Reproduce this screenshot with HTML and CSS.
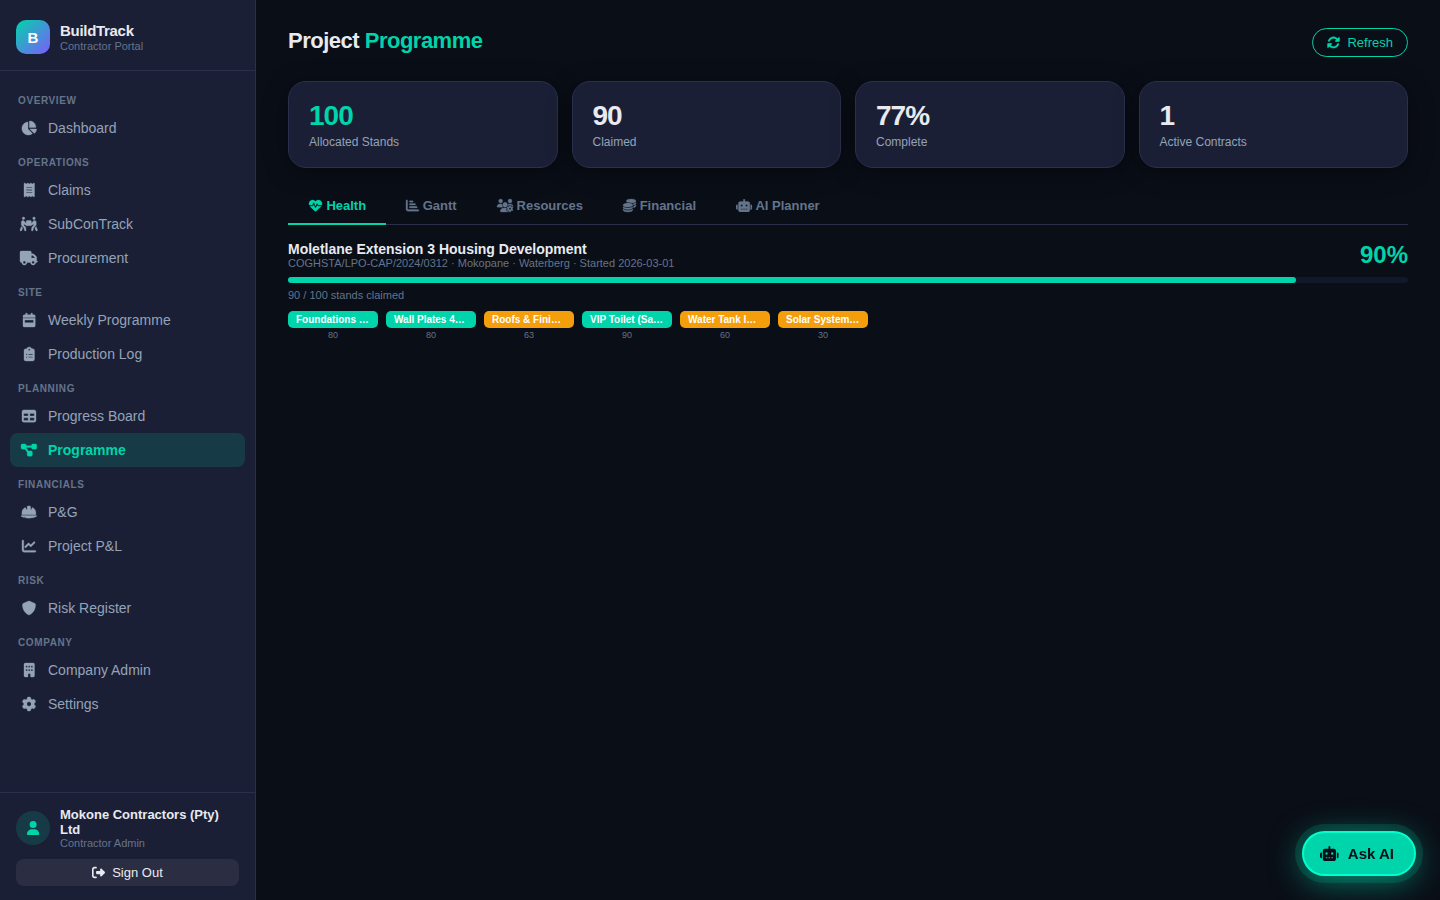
FILE: index.html
```html
<!DOCTYPE html>
<html lang="en">
<head>
    <meta charset="UTF-8">
    <meta name="viewport" content="width=device-width, initial-scale=1.0">
    <title>BuildTrack - Project Programme</title>
    <link rel="stylesheet" href="styles.css">
</head>
<body>
    <!-- Icon shapes shared by the page -->
    <svg class="sprite" aria-hidden="true">
        <symbol id="i-robot" viewBox="0 0 640 512"><path d="M320 0c17.7 0 32 14.3 32 32V96H472c39.8 0 72 32.2 72 72V440c0 39.8-32.2 72-72 72H168c-39.8 0-72-32.2-72-72V168c0-39.8 32.2-72 72-72H288V32c0-17.7 14.3-32 32-32zM208 384c-8.8 0-16 7.2-16 16s7.2 16 16 16h32c8.8 0 16-7.2 16-16s-7.2-16-16-16H208zm96 0c-8.8 0-16 7.2-16 16s7.2 16 16 16h32c8.8 0 16-7.2 16-16s-7.2-16-16-16H304zm96 0c-8.8 0-16 7.2-16 16s7.2 16 16 16h32c8.8 0 16-7.2 16-16s-7.2-16-16-16H400zM264 256a40 40 0 1 0 -80 0 40 40 0 1 0 80 0zm152 40a40 40 0 1 0 0-80 40 40 0 1 0 0 80zM48 224H64V416H48c-26.5 0-48-21.5-48-48V272c0-26.5 21.5-48 48-48zm544 0c26.5 0 48 21.5 48 48v96c0 26.5-21.5 48-48 48H576V224h16z"/></symbol>
    </svg>

    <!-- Sidebar -->
    <aside class="sidebar">
        <div class="brand">
            <div class="brand-logo">B</div>
            <div>
                <div class="brand-name">BuildTrack</div>
                <div class="brand-sub">Contractor Portal</div>
            </div>
        </div>

        <nav class="nav">
            <div class="nav-label">Overview</div>
            <a class="nav-item">
                <span class="nav-icon"><svg class="icon" viewBox="0 0 576 512"><path d="M304 240V16.6c0-9 7-16.6 16-16.6C443.7 0 544 100.3 544 224c0 9-7.6 16-16.6 16H304zM32 272C32 150.7 122.1 50.3 239 34.3c9.2-1.3 17 6.1 17 15.4V288L412.5 444.5c6.7 6.7 6.2 17.7-1.5 23.1C371.8 495.6 323.8 512 272 512C139.5 512 32 404.6 32 272zm526.4 16c9.3 0 16.6 7.8 15.4 17c-7.7 55.9-34.6 105.6-73.9 142.3c-6 5.6-15.4 5.2-21.2-.7L320 288H558.4z"/></svg></span>
                Dashboard
            </a>

            <div class="nav-label">Operations</div>
            <a class="nav-item">
                <span class="nav-icon"><svg class="icon" viewBox="0 0 384 512"><path d="M14 2.2C22.5-1.7 32.5-.3 39.6 5.8L80 40.4 120.4 5.8c9-7.7 22.3-7.7 31.2 0L192 40.4 232.4 5.8c9-7.7 22.3-7.7 31.2 0L304 40.4 344.4 5.8c7.1-6.1 17.1-7.5 25.6-3.6s14 12.4 14 21.8V488c0 9.4-5.5 17.9-14 21.8s-18.5 2.5-25.6-3.6L304 471.6l-40.4 34.6c-9 7.7-22.3 7.7-31.2 0L192 471.6l-40.4 34.6c-9 7.7-22.3 7.7-31.2 0L80 471.6 39.6 506.2c-7.1 6.1-17.1 7.5-25.6 3.6S0 497.4 0 488V24C0 14.6 5.5 6.1 14 2.2zM96 144c-8.8 0-16 7.2-16 16s7.2 16 16 16H288c8.8 0 16-7.2 16-16s-7.2-16-16-16H96zM80 352c0 8.8 7.2 16 16 16H288c8.8 0 16-7.2 16-16s-7.2-16-16-16H96c-8.8 0-16 7.2-16 16zM96 240c-8.8 0-16 7.2-16 16s7.2 16 16 16H288c8.8 0 16-7.2 16-16s-7.2-16-16-16H96z"/></svg></span>
                Claims
            </a>
            <a class="nav-item">
                <span class="nav-icon"><svg class="icon" viewBox="0 0 640 512"><path d="M80 48a48 48 0 1 1 96 0A48 48 0 1 1 80 48zm64 193.7v65.1l51 51c7.1 7.1 11.8 16.2 13.4 26.1l15.2 90.9c2.9 17.4-8.9 33.9-26.3 36.8s-33.9-8.9-36.8-26.3l-14.3-85.9L66.8 320C54.8 308 48 291.7 48 274.7V186.6c0-32.4 26.2-58.6 58.6-58.6c24.1 0 46.5 12 59.9 32l47.4 71.1 10.1 5V160c0-17.7 14.3-32 32-32H384c17.7 0 32 14.3 32 32v76.2l10.1-5L473.5 160c13.3-20 35.8-32 59.9-32c32.4 0 58.6 26.2 58.6 58.6v88.1c0 17-6.7 33.3-18.7 45.3l-79.4 79.4-14.3 85.9c-2.9 17.4-19.4 29.2-36.8 26.3s-29.2-19.4-26.3-36.8l15.2-90.9c1.6-9.9 6.3-19 13.4-26.1l51-51V241.7l-19 28.5c-4.6 7-11 12.6-18.5 16.3l-59.6 29.8c-2.4 1.3-4.9 2.2-7.6 2.8c-2.6 .6-5.3 .9-7.9 .8H256.7c-2.5 .1-5-.2-7.5-.7c-2.9-.6-5.6-1.6-8.1-3l-59.5-29.8c-7.5-3.7-13.8-9.4-18.5-16.3l-19-28.5zM2.3 468.1L50.1 348.6l49.2 49.2-37.6 94c-6.6 16.4-25.2 24.4-41.6 17.8S-4.3 484.5 2.3 468.1zM512 0a48 48 0 1 1 0 96 48 48 0 1 1 0-96zm77.9 348.6l47.8 119.5c6.6 16.4-1.4 35-17.8 41.6s-35-1.4-41.6-17.8l-37.6-94 49.2-49.2z"/></svg></span>
                SubConTrack
            </a>
            <a class="nav-item">
                <span class="nav-icon"><svg class="icon" viewBox="0 0 640 512"><path d="M48 0C21.5 0 0 21.5 0 48V368c0 26.5 21.5 48 48 48H64c0 53 43 96 96 96s96-43 96-96H384c0 53 43 96 96 96s96-43 96-96h32c17.7 0 32-14.3 32-32s-14.3-32-32-32V288 256 237.3c0-17-6.7-33.3-18.7-45.3L512 114.7c-12-12-28.3-18.7-45.3-18.7H416V48c0-26.5-21.5-48-48-48H48zM416 160h50.7L544 237.3V256H416V160zM112 416a48 48 0 1 1 96 0 48 48 0 1 1 -96 0zm368-48a48 48 0 1 1 0 96 48 48 0 1 1 0-96z"/></svg></span>
                Procurement
            </a>

            <div class="nav-label">Site</div>
            <a class="nav-item">
                <span class="nav-icon"><svg class="icon" viewBox="0 0 448 512"><path d="M128 0c17.7 0 32 14.3 32 32V64H288V32c0-17.7 14.3-32 32-32s32 14.3 32 32V64h48c26.5 0 48 21.5 48 48v48H0V112C0 85.5 21.5 64 48 64H96V32c0-17.7 14.3-32 32-32zM0 192H448V464c0 26.5-21.5 48-48 48H48c-26.5 0-48-21.5-48-48V192zm80 64c-8.8 0-16 7.2-16 16v64c0 8.8 7.2 16 16 16H368c8.8 0 16-7.2 16-16V272c0-8.8-7.2-16-16-16H80z"/></svg></span>
                Weekly Programme
            </a>
            <a class="nav-item">
                <span class="nav-icon"><svg class="icon" viewBox="0 0 384 512"><path d="M192 0c-41.8 0-77.4 26.7-90.5 64H64C28.7 64 0 92.7 0 128V448c0 35.3 28.7 64 64 64H320c35.3 0 64-28.7 64-64V128c0-35.3-28.7-64-64-64H282.5C269.4 26.7 233.8 0 192 0zm0 64a32 32 0 1 1 0 64 32 32 0 1 1 0-64zM72 272a24 24 0 1 1 48 0 24 24 0 1 1 -48 0zm104-16H304c8.8 0 16 7.2 16 16s-7.2 16-16 16H176c-8.8 0-16-7.2-16-16s7.2-16 16-16zM72 368a24 24 0 1 1 48 0 24 24 0 1 1 -48 0zm88 0c0-8.8 7.2-16 16-16H304c8.8 0 16 7.2 16 16s-7.2 16-16 16H176c-8.8 0-16-7.2-16-16z"/></svg></span>
                Production Log
            </a>

            <div class="nav-label">Planning</div>
            <a class="nav-item">
                <span class="nav-icon"><svg class="icon" viewBox="0 0 512 512"><path d="M64 256V160H224v96H64zm0 64H224v96H64V320zm224 96V320H448v96H288zM448 256H288V160H448v96zM64 32C28.7 32 0 60.7 0 96V416c0 35.3 28.7 64 64 64H448c35.3 0 64-28.7 64-64V96c0-35.3-28.7-64-64-64H64z"/></svg></span>
                Progress Board
            </a>
            <a class="nav-item active">
                <span class="nav-icon"><svg class="icon" viewBox="0 0 576 512"><path d="M0 80C0 53.5 21.5 32 48 32h96c26.5 0 48 21.5 48 48V96H384V80c0-26.5 21.5-48 48-48h96c26.5 0 48 21.5 48 48v96c0 26.5-21.5 48-48 48H432c-26.5 0-48-21.5-48-48V160H192v16c0 1.7-.1 3.4-.3 5L272 288h96c26.5 0 48 21.5 48 48v96c0 26.5-21.5 48-48 48H272c-26.5 0-48-21.5-48-48V336c0-1.7 .1-3.4 .3-5L144 224H48c-26.5 0-48-21.5-48-48V80z"/></svg></span>
                Programme
            </a>

            <div class="nav-label">Financials</div>
            <a class="nav-item">
                <span class="nav-icon"><svg class="icon" viewBox="0 0 576 512"><path d="M256 32c-17.7 0-32 14.3-32 32v2.3 99.6c0 5.6-4.5 10.1-10.1 10.1c-3.6 0-7-1.9-8.8-5.1L157.1 87C83 123.5 32 199.8 32 288v64H544l0-66.4c-.9-87.2-51.7-162.4-125.1-198.6l-48 83.9c-1.8 3.2-5.2 5.1-8.8 5.1c-5.6 0-10.1-4.5-10.1-10.1V66.3 64c0-17.7-14.3-32-32-32H256zM16.6 384C7.4 384 0 391.4 0 400.6c0 4.7 2 9.2 5.8 11.9C27.5 428.4 111.8 480 288 480s260.5-51.6 282.2-67.5c3.8-2.8 5.8-7.2 5.8-11.9c0-9.2-7.4-16.6-16.6-16.6H16.6z"/></svg></span>
                P&amp;G
            </a>
            <a class="nav-item">
                <span class="nav-icon"><svg class="icon" viewBox="0 0 512 512"><path d="M64 64c0-17.7-14.3-32-32-32S0 46.3 0 64V400c0 44.2 35.8 80 80 80H480c17.7 0 32-14.3 32-32s-14.3-32-32-32H80c-8.8 0-16-7.2-16-16V64zm406.6 86.6c12.5-12.5 12.5-32.8 0-45.3s-32.8-12.5-45.3 0L320 210.7l-57.4-57.4c-12.5-12.5-32.8-12.5-45.3 0l-112 112c-12.5 12.5-12.5 32.8 0 45.3s32.8 12.5 45.3 0L240 221.3l57.4 57.4c12.5 12.5 32.8 12.5 45.3 0l128-128z"/></svg></span>
                Project P&amp;L
            </a>

            <div class="nav-label">Risk</div>
            <a class="nav-item">
                <span class="nav-icon"><svg class="icon" viewBox="0 0 512 512"><path d="M256 0c4.6 0 9.2 1 13.4 2.9L457.7 82.8c22 9.3 38.4 31 38.3 57.2c-.5 99.2-41.3 280.7-213.6 363.2c-16.7 8-36.1 8-52.8 0C57.3 420.7 16.5 239.2 16 140c-.1-26.2 16.3-47.9 38.3-57.2L242.7 2.9C246.8 1 251.4 0 256 0z"/></svg></span>
                Risk Register
            </a>

            <div class="nav-label">Company</div>
            <a class="nav-item">
                <span class="nav-icon"><svg class="icon" viewBox="0 0 384 512"><path d="M48 0C21.5 0 0 21.5 0 48V464c0 26.5 21.5 48 48 48h96V432c0-26.5 21.5-48 48-48s48 21.5 48 48v80h96c26.5 0 48-21.5 48-48V48c0-26.5-21.5-48-48-48H48zM64 240c0-8.8 7.2-16 16-16h32c8.8 0 16 7.2 16 16v32c0 8.8-7.2 16-16 16H80c-8.8 0-16-7.2-16-16V240zm112-16h32c8.8 0 16 7.2 16 16v32c0 8.8-7.2 16-16 16H176c-8.8 0-16-7.2-16-16V240c0-8.8 7.2-16 16-16zm80 16c0-8.8 7.2-16 16-16h32c8.8 0 16 7.2 16 16v32c0 8.8-7.2 16-16 16H272c-8.8 0-16-7.2-16-16V240zM80 96h32c8.8 0 16 7.2 16 16v32c0 8.8-7.2 16-16 16H80c-8.8 0-16-7.2-16-16V112c0-8.8 7.2-16 16-16zm80 16c0-8.8 7.2-16 16-16h32c8.8 0 16 7.2 16 16v32c0 8.8-7.2 16-16 16H176c-8.8 0-16-7.2-16-16V112zM272 96h32c8.8 0 16 7.2 16 16v32c0 8.8-7.2 16-16 16H272c-8.8 0-16-7.2-16-16V112c0-8.8 7.2-16 16-16z"/></svg></span>
                Company Admin
            </a>
            <a class="nav-item">
                <span class="nav-icon"><svg class="icon" viewBox="0 0 512 512"><path d="M495.9 166.6c3.2 8.7 .5 18.4-6.4 24.6l-43.3 39.4c1.1 8.3 1.7 16.8 1.7 25.4s-.6 17.1-1.7 25.4l43.3 39.4c6.9 6.2 9.6 15.9 6.4 24.6c-4.4 11.9-9.7 23.3-15.8 34.3l-4.7 8.1c-6.6 11-14 21.4-22.1 31.2c-5.9 7.2-15.7 9.6-24.5 6.8l-55.7-17.7c-13.4 10.3-28.2 18.9-44 25.4l-12.5 57.1c-2 9.1-9 16.3-18.2 17.8c-13.8 2.3-28 3.5-42.5 3.5s-28.7-1.2-42.5-3.5c-9.2-1.5-16.2-8.7-18.2-17.8l-12.5-57.1c-15.8-6.5-30.6-15.1-44-25.4L83.1 425.9c-8.8 2.8-18.6 .3-24.5-6.8c-8.1-9.8-15.5-20.2-22.1-31.2l-4.7-8.1c-6.1-11-11.4-22.4-15.8-34.3c-3.2-8.7-.5-18.4 6.4-24.6l43.3-39.4C64.6 273.1 64 264.6 64 256s.6-17.1 1.7-25.4L22.4 191.2c-6.9-6.2-9.6-15.9-6.4-24.6c4.4-11.9 9.7-23.3 15.8-34.3l4.7-8.1c6.6-11 14-21.4 22.1-31.2c5.9-7.2 15.7-9.6 24.5-6.8l55.7 17.7c13.4-10.3 28.2-18.9 44-25.4l12.5-57.1c2-9.1 9-16.3 18.2-17.8C227.3 1.2 241.5 0 256 0s28.7 1.2 42.5 3.5c9.2 1.5 16.2 8.7 18.2 17.8l12.5 57.1c15.8 6.5 30.6 15.1 44 25.4l55.7-17.7c8.8-2.8 18.6-.3 24.5 6.8c8.1 9.8 15.5 20.2 22.1 31.2l4.7 8.1c6.1 11 11.4 22.4 15.8 34.3zM256 336a80 80 0 1 0 0-160 80 80 0 1 0 0 160z"/></svg></span>
                Settings
            </a>
        </nav>

        <div class="sidebar-footer">
            <div class="user">
                <div class="avatar"><svg class="icon" viewBox="0 0 448 512"><path d="M224 256A128 128 0 1 0 224 0a128 128 0 1 0 0 256zm-45.7 48C79.8 304 0 383.8 0 482.3C0 498.7 13.3 512 29.7 512H418.3c16.4 0 29.7-13.3 29.7-29.7C448 383.8 368.2 304 269.7 304H178.3z"/></svg></div>
                <div>
                    <div class="user-name">Mokone Contractors (Pty) Ltd</div>
                    <div class="user-role">Contractor Admin</div>
                </div>
            </div>
            <button class="btn-signout">
                <svg class="icon" viewBox="0 0 512 512"><path d="M377.9 105.9L500.7 228.7c7.2 7.2 11.3 17.1 11.3 27.3s-4.1 20.1-11.3 27.3L377.9 406.1c-6.4 6.4-15 9.9-24 9.9c-18.7 0-33.9-15.2-33.9-33.9l0-62.1-128 0c-17.7 0-32-14.3-32-32l0-64c0-17.7 14.3-32 32-32l128 0 0-62.1c0-18.7 15.2-33.9 33.9-33.9c9 0 17.6 3.6 24 9.9zM160 96L96 96c-17.7 0-32 14.3-32 32l0 256c0 17.7 14.3 32 32 32l64 0c17.7 0 32 14.3 32 32s-14.3 32-32 32l-64 0c-53 0-96-43-96-96L0 128C0 75 43 32 96 32l64 0c17.7 0 32 14.3 32 32s-14.3 32-32 32z"/></svg>
                Sign Out
            </button>
        </div>
    </aside>

    <!-- Main content -->
    <main class="main">
        <header class="page-header">
            <h1>Project <span>Programme</span></h1>
            <button class="btn-refresh">
                <svg class="icon" viewBox="0 0 512 512"><path d="M142.9 142.9c-17.5 17.5-30.1 38-37.8 59.8c-5.9 16.7-24.2 25.4-40.8 19.5s-25.4-24.2-19.5-40.8C55.6 150.7 73.2 122 97.6 97.6c87.2-87.2 228.3-87.5 315.8-1L455 55c6.9-6.9 17.2-8.9 26.2-5.2s14.8 12.5 14.8 22.2l0 128c0 13.3-10.7 24-24 24l-8.4 0L344 224c-9.7 0-18.5-5.8-22.2-14.8s-1.7-19.3 5.2-26.2l41.1-41.1c-62.6-61.5-163.1-61.2-225.3 1zM16 312c0-13.3 10.7-24 24-24l7.6 0 .7 0L168 288c9.7 0 18.5 5.8 22.2 14.8s1.7 19.3-5.2 26.2l-41.1 41.1c62.6 61.5 163.1 61.2 225.3-1c17.5-17.5 30.1-38 37.8-59.8c5.9-16.7 24.2-25.4 40.8-19.5s25.4 24.2 19.5 40.8c-10.8 30.6-28.4 59.3-52.9 83.8c-87.2 87.2-228.3 87.5-315.8 1L57 457c-6.9 6.9-17.2 8.9-26.2 5.2S16 449.7 16 440l0-119.6 0-.7 0-7.6z"/></svg>
                Refresh
            </button>
        </header>

        <section class="stats">
            <div class="stat-card">
                <div class="stat-value accent">100</div>
                <div class="stat-label">Allocated Stands</div>
            </div>
            <div class="stat-card">
                <div class="stat-value">90</div>
                <div class="stat-label">Claimed</div>
            </div>
            <div class="stat-card">
                <div class="stat-value">77%</div>
                <div class="stat-label">Complete</div>
            </div>
            <div class="stat-card">
                <div class="stat-value">1</div>
                <div class="stat-label">Active Contracts</div>
            </div>
        </section>

        <div class="tabs">
            <button class="tab active"><svg class="icon" viewBox="0 0 512 512"><path d="M228.3 469.1L47.6 300.4c-4.2-3.9-8.2-8.1-11.9-12.4h87c22.6 0 43-13.6 51.7-34.5l10.5-25.2 49.3 109.5c3.8 8.5 12.1 14 21.4 14.1s17.8-5 22-13.3L320 253.7l1.7 3.4c9.5 19 28.9 31 50.1 31H476.3c-3.7 4.3-7.7 8.5-11.9 12.4L283.7 469.1c-7.5 7-17.4 10.9-27.7 10.9s-20.2-3.9-27.7-10.9zM503.7 240h-132c-3 0-5.8-1.7-7.2-4.4l-23.2-46.3c-4.1-8.1-12.4-13.3-21.5-13.3s-17.4 5.1-21.5 13.3l-41.4 82.8L205.9 158.2c-3.9-8.7-12.7-14.3-22.2-14.1s-18.1 5.9-21.8 14.8l-31.8 76.3c-1.2 3-4.2 4.9-7.4 4.9H16c-2.6 0-5 .4-7.3 1.1C3 225.2 0 208.2 0 190.9v-5.8c0-69.9 50.5-129.5 119.4-141C165 36.5 211.4 51.4 244 84l12 12 12-12c32.6-32.6 79-47.5 124.6-39.9C461.5 55.6 512 115.2 512 185.1v5.8c0 16.9-2.8 33.5-8.3 49.1z"/></svg> Health</button>
            <button class="tab"><svg class="icon" viewBox="0 0 512 512"><path d="M32 32c17.7 0 32 14.3 32 32V400c0 8.8 7.2 16 16 16H480c17.7 0 32 14.3 32 32s-14.3 32-32 32H80c-44.2 0-80-35.8-80-80V64C0 46.3 14.3 32 32 32zm96 64c0-17.7 14.3-32 32-32h96c17.7 0 32 14.3 32 32s-14.3 32-32 32H160c-17.7 0-32-14.3-32-32zm32 80H352c17.7 0 32 14.3 32 32s-14.3 32-32 32H160c-17.7 0-32-14.3-32-32s14.3-32 32-32zm0 112H416c17.7 0 32 14.3 32 32s-14.3 32-32 32H160c-17.7 0-32-14.3-32-32s14.3-32 32-32z"/></svg> Gantt</button>
            <button class="tab"><svg class="icon" viewBox="0 0 640 512"><path d="M144 160A80 80 0 1 0 144 0a80 80 0 1 0 0 160zm368 0A80 80 0 1 0 512 0a80 80 0 1 0 0 160zM0 298.7C0 310.4 9.6 320 21.3 320H234.7c.2 0 .4 0 .7 0c-26.6-23.5-43.3-57.8-43.3-96c0-7.6 .7-15 1.9-22.3c-13.6-6.3-28.7-9.7-44.6-9.7H106.7C47.8 192 0 239.8 0 298.7zM320 320c24 0 45.9-8.8 62.7-23.3c2.5-3.7 5.2-7.3 8-10.7c2.7-3.3 5.7-6.1 9-8.3C410 262.3 416 243.9 416 224c0-53-43-96-96-96s-96 43-96 96s43 96 96 96zm65.4 60.2c-10.3-5.9-18.1-16.2-20.8-28.2H261.3C187.7 352 128 411.7 128 485.3c0 14.7 11.9 26.7 26.7 26.7H455.2c-2.1-5.2-3.2-10.9-3.2-16.4v-3c-1.3-.7-2.7-1.5-4-2.3l-2.6 1.5c-16.8 9.7-40.5 8-54.7-9.7c-4.5-5.6-8.6-11.5-12.4-17.6l-2.6-4.5c-3.4-6.2-6.4-12.6-9-19.3c-8.2-21.2 2.2-42.6 19-52.3l2.7-1.5c0-.8 0-1.5 0-2.3s0-1.5 0-2.3l-2.7-1.5zM533.3 192H490.7c-15.9 0-31 3.5-44.6 9.7c1.3 7.2 1.9 14.7 1.9 22.3c0 17.4-3.5 33.9-9.7 49c2.5 .9 4.9 2 7.1 3.3l2.6 1.5c1.3-.8 2.6-1.6 4-2.3v-3c0-19.4 13.3-39.1 35.8-42.6c7.9-1.2 16-1.9 24.2-1.9s16.3 .6 24.2 1.9c22.5 3.5 35.8 23.2 35.8 42.6v3c1.3 .7 2.7 1.5 4 2.3l2.6-1.5c16.8-9.7 40.5-8 54.7 9.7c2.3 2.8 4.5 5.8 6.6 8.7c-2.1-57.1-49-102.7-106.6-102.7zm91.3 163.9c6.3-3.6 9.5-11.1 6.8-18c-2.1-5.5-4.6-10.8-7.4-15.9l-2.3-4c-3.1-5.1-6.5-9.9-10.2-14.5c-4.6-5.7-12.7-6.7-19-3L574.4 311c-8.9-7.6-19.1-13.6-30.4-17.6v-21c0-7.3-4.9-13.8-12.1-14.9c-6.5-1-13.1-1.5-19.9-1.5s-13.4 .5-19.9 1.5c-7.2 1.1-12.1 7.6-12.1 14.9v21c-11.2 4-21.5 10-30.4 17.6l-18.2-10.5c-6.3-3.6-14.4-2.6-19 3c-3.7 4.6-7.1 9.5-10.2 14.6l-2.3 3.9c-2.8 5.1-5.3 10.4-7.4 15.9c-2.6 6.8 .5 14.3 6.8 17.9l18.2 10.5c-1 5.7-1.6 11.6-1.6 17.6s.6 11.9 1.6 17.5l-18.2 10.5c-6.3 3.6-9.5 11.1-6.8 17.9c2.1 5.5 4.6 10.7 7.4 15.8l2.4 4.1c3 5.1 6.4 9.9 10.1 14.5c4.6 5.7 12.7 6.7 19 3L449.6 457c8.9 7.6 19.2 13.6 30.4 17.6v21c0 7.3 4.9 13.8 12.1 14.9c6.5 1 13.1 1.5 19.9 1.5s13.4-.5 19.9-1.5c7.2-1.1 12.1-7.6 12.1-14.9v-21c11.2-4 21.5-10 30.4-17.6l18.2 10.5c6.3 3.6 14.4 2.6 19-3c3.7-4.6 7.1-9.4 10.1-14.5l2.4-4.2c2.8-5.1 5.3-10.3 7.4-15.8c2.6-6.8-.5-14.3-6.8-17.9l-18.2-10.5c1-5.7 1.6-11.6 1.6-17.5s-.6-11.9-1.6-17.6l18.2-10.5zM472 384a40 40 0 1 1 80 0 40 40 0 1 1 -80 0z"/></svg> Resources</button>
            <button class="tab"><svg class="icon" viewBox="0 0 512 512"><path d="M512 80c0 18-14.3 34.6-38.4 48c-29.1 16.1-72.5 27.5-122.3 30.9c-3.7-1.8-7.4-3.5-11.3-5C300.6 137.4 248.2 128 192 128c-8.3 0-16.4 .2-24.5 .6l-1.1-.6C142.3 114.6 128 98 128 80c0-44.2 86-80 192-80S512 35.8 512 80zM160.7 161.1c10.2-.7 20.7-1.1 31.3-1.1c62.2 0 117.4 12.3 152.5 31.4C369.3 204.9 384 221.7 384 240c0 4-.7 7.9-2.1 11.7c-4.6 13.2-17 25.3-35 35.5l-1.3 .7c-35 19.4-90.8 32-153.6 32c-59.6 0-112.9-11.3-148.2-29.1c-1.9-.9-3.7-1.9-5.5-2.9C14.3 274.6 0 258 0 240c0-34.8 53.4-64.5 128-75.4c10.5-1.5 21.4-2.7 32.7-3.5zM416 240c0-21.9-10.6-39.9-24.1-53.4c28.3-4.4 54.2-11.4 76.2-20.5c16.3-6.8 31.5-15.2 43.9-25.5V176c0 19.3-16.5 37.1-43.8 50.9c-14.6 7.4-32.4 13.7-52.4 18.5c.1-1.8 .2-3.5 .2-5.3zm-32 96c0 18-14.3 34.6-38.4 48c-1.8 1-3.6 1.9-5.5 2.9C304.9 404.7 251.6 416 192 416c-62.8 0-118.6-12.6-153.6-32C14.3 370.6 0 354 0 336V300.6c12.5 10.3 27.6 18.7 43.9 25.5C83.4 342.6 135.8 352 192 352s108.6-9.4 148.1-25.9c7.8-3.2 15.3-6.9 22.4-10.9c6.1-3.4 11.8-7.2 17.2-11.2c1.5-1.1 2.9-2.3 4.3-3.4V304v5.7V336zm32 0V304 278.1c19-4.2 36.5-9.5 52.1-16c16.3-6.8 31.5-15.2 43.9-25.5V272c0 10.5-5 21-14.9 30.9c-16.3 16.3-45 29.7-81.3 38.4c.1-1.7 .2-3.5 .2-5.3zM192 448c56.2 0 108.6-9.4 148.1-25.9c16.3-6.8 31.5-15.2 43.9-25.5V432c0 44.2-86 80-192 80S0 476.2 0 432V396.6c12.5 10.3 27.6 18.7 43.9 25.5C83.4 438.6 135.8 448 192 448z"/></svg> Financial</button>
            <button class="tab"><svg class="icon icon-wide"><use href="#i-robot"/></svg> AI Planner</button>
        </div>

        <section class="project">
            <div class="project-head">
                <div>
                    <div class="project-name">Moletlane Extension 3 Housing Development</div>
                    <div class="project-meta">COGHSTA/LPO-CAP/2024/0312 · Mokopane · Waterberg · Started 2026-03-01</div>
                </div>
                <div class="project-pct">90%</div>
            </div>
            <div class="progress"><div class="progress-fill" style="width: 90%"></div></div>
            <div class="project-claimed">90 / 100 stands claimed</div>

            <div class="milestones">
                <div class="milestone"><div class="pill">Foundations …</div><div class="count">80</div></div>
                <div class="milestone"><div class="pill">Wall Plates 4…</div><div class="count">80</div></div>
                <div class="milestone"><div class="pill warn">Roofs &amp; Fini…</div><div class="count">63</div></div>
                <div class="milestone"><div class="pill">VIP Toilet (Sa…</div><div class="count">90</div></div>
                <div class="milestone"><div class="pill warn">Water Tank I…</div><div class="count">60</div></div>
                <div class="milestone"><div class="pill warn">Solar System…</div><div class="count">30</div></div>
            </div>
        </section>
    </main>

    <button class="ask-ai"><svg class="icon icon-wide"><use href="#i-robot"/></svg> Ask AI</button>
</body>
</html>
```
FILE: styles.css
```css
* {
    box-sizing: border-box;
    margin: 0;
    padding: 0;
}

body {
    display: flex;
    height: 100vh;
    overflow: hidden;
    font-family: 'Liberation Sans', Arial, sans-serif;
    font-size: 14px;
    color: #e8eaf0;
    background-color: #0a0e17;
}

button {
    font-family: inherit;
    cursor: pointer;
    border: none;
    background: none;
}

.sprite {
    position: absolute;
    width: 0;
    height: 0;
}

.icon {
    height: 1em;
    fill: currentColor;
    overflow: visible;
    vertical-align: -0.125em;
}

.icon-wide {
    width: 1.25em;
}

/* Sidebar */
.sidebar {
    display: flex;
    flex-direction: column;
    flex-shrink: 0;
    width: 256px;
    background-color: #1b1f35;
    border-right: 1px solid #2a2f4c;
}

.brand {
    display: flex;
    align-items: center;
    gap: 10px;
    padding: 20px 16px 16px;
    border-bottom: 1px solid #2a2f4c;
}

.brand-logo {
    display: flex;
    align-items: center;
    justify-content: center;
    width: 34px;
    height: 34px;
    border-radius: 10px;
    font-size: 15px;
    font-weight: bold;
    color: #fff;
    background: linear-gradient(135deg, #00d4aa, #7c5cfc);
}

.brand-name {
    font-size: 15px;
    font-weight: bold;
    letter-spacing: -0.3px;
    line-height: 17px;
}

.brand-sub {
    margin-top: 1px;
    font-size: 11px;
    line-height: 12px;
    color: #64748b;
}

.nav {
    flex: 1;
    padding: 12px 10px;
}

.nav-label {
    height: 28px;
    padding: 12px 8px 0;
    font-size: 10px;
    font-weight: bold;
    line-height: 11px;
    letter-spacing: 0.6px;
    text-transform: uppercase;
    color: #64748b;
}

.nav-item {
    display: flex;
    align-items: center;
    gap: 10px;
    height: 34px;
    padding: 0 10px;
    border-radius: 8px;
    color: #94a3b8;
}

.nav-item.active {
    font-weight: bold;
    color: #00d4aa;
    background-color: rgba(0, 212, 170, 0.15);
}

.nav-icon {
    display: flex;
    justify-content: center;
    width: 18px;
}

.nav-icon .icon {
    flex-shrink: 0;
}

.nav-icon .icon,
.tab .icon {
    stroke: currentColor;
    stroke-width: 12px;
}

.sidebar-footer {
    padding: 14px 16px;
    border-top: 1px solid #2a2f4c;
}

.user {
    display: flex;
    align-items: center;
    gap: 10px;
    margin-bottom: 10px;
}

.avatar {
    display: flex;
    align-items: center;
    justify-content: center;
    flex-shrink: 0;
    width: 34px;
    height: 34px;
    border-radius: 50%;
    color: #00d4aa;
    background-color: rgba(0, 212, 170, 0.15);
}

.user-name {
    font-size: 13px;
    font-weight: bold;
    line-height: 15px;
}

.user-role {
    font-size: 11px;
    line-height: 12px;
    color: #64748b;
}

.btn-signout {
    display: flex;
    align-items: center;
    justify-content: center;
    gap: 7px;
    width: 100%;
    height: 27px;
    border-radius: 8px;
    font-size: 13px;
    color: #e8eaf0;
    background-color: rgba(255, 255, 255, 0.07);
}

/* Main */
.main {
    flex: 1;
    padding: 28px 32px;
}

.page-header {
    display: flex;
    align-items: flex-start;
    justify-content: space-between;
    margin-bottom: 24px;
}

h1 {
    font-size: 22px;
    line-height: 25px;
    letter-spacing: -0.5px;
}

h1 span {
    color: #00d4aa;
}

.btn-refresh {
    display: flex;
    align-items: center;
    gap: 7px;
    height: 29px;
    padding: 0 14px;
    border: 1px solid #00d4aa;
    border-radius: 20px;
    font-size: 13px;
    color: #00d4aa;
}

.btn-refresh .icon {
    stroke: currentColor;
    stroke-width: 12px;
}

.stats {
    display: grid;
    grid-template-columns: repeat(4, 1fr);
    gap: 14px;
    margin-bottom: 20px;
}

.stat-card {
    height: 87px;
    padding: 18px 20px;
    border: 1px solid #2a2f4c;
    border-radius: 18px;
    background-color: #1b1f35;
    box-shadow: 0 4px 24px rgba(0, 0, 0, 0.4);
}

.stat-value {
    font-size: 28px;
    font-weight: bold;
    line-height: 32px;
    letter-spacing: -1px;
}

.stat-value.accent {
    color: #00d4aa;
}

.stat-label {
    margin-top: 3px;
    font-size: 12px;
    line-height: 14px;
    color: #94a3b8;
}

.tabs {
    display: flex;
    height: 37px;
    margin-bottom: 16px;
    border-bottom: 1px solid #2a2f4c;
}

.tab {
    height: 37px;
    padding: 0 20px;
    border-bottom: 2px solid transparent;
    font-size: 13px;
    font-weight: bold;
    color: #64748b;
}

.tab.active {
    color: #00d4aa;
    border-bottom-color: #00d4aa;
}

.tab.active .icon {
    margin: 0 0.9px;
}

/* Project health */
.project-head {
    display: flex;
    align-items: center;
    justify-content: space-between;
    margin-bottom: 8px;
}

.project-name {
    font-size: 14px;
    font-weight: bold;
    line-height: 16px;
}

.project-meta {
    font-size: 11px;
    line-height: 12px;
    color: #64748b;
}

.project-pct {
    font-size: 24px;
    font-weight: bold;
    line-height: 28px;
    color: #00d4aa;
}

.progress {
    height: 6px;
    border-radius: 3px;
    background-color: #111827;
}

.progress-fill {
    height: 100%;
    border-radius: 3px;
    background-color: #00d4aa;
}

.project-claimed {
    margin: 6px 0 10px;
    font-size: 11px;
    line-height: 12px;
    color: #64748b;
}

.milestones {
    display: flex;
    gap: 8px;
}

.milestone {
    width: 90px;
    text-align: center;
}

.pill {
    height: 17px;
    padding: 0 8px;
    border-radius: 5px;
    font-size: 10px;
    font-weight: bold;
    line-height: 17px;
    text-align: left;
    white-space: nowrap;
    color: #fff;
    background-color: #00d4aa;
}

.pill.warn {
    background-color: #f59e0b;
}

.count {
    margin-top: 2px;
    font-size: 9px;
    line-height: 11px;
    color: #64748b;
}

/* Floating assistant button */
.ask-ai {
    position: fixed;
    right: 24px;
    bottom: 24px;
    display: flex;
    align-items: center;
    gap: 9px;
    height: 45px;
    padding: 0 20px 0 16px;
    border: 2px solid #00ffcc;
    border-radius: 50px;
    font-size: 15px;
    font-weight: bold;
    color: #0a0e17;
    background-color: #00d4aa;
    box-shadow: 0 0 0 7px rgba(0, 212, 170, 0.15), 0 6px 32px rgba(0, 212, 170, 0.55);
}
```
